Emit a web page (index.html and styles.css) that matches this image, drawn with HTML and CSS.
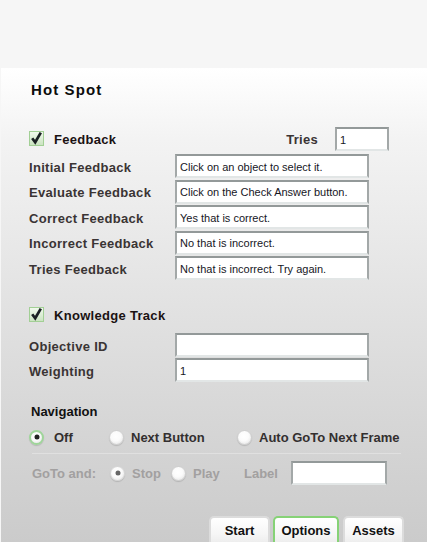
FILE: index.html
```html
<!DOCTYPE html>
<html>
<head>
<meta charset="utf-8">
<link rel="stylesheet" href="styles.css">
</head>
<body>
<div class="top"></div>
<div class="panel">
  <h1 class="title">Hot Spot</h1>

  <div class="section-head">
    <span class="check"><svg width="15" height="15" viewBox="0 0 15 15"><defs><linearGradient id="cg" x1="0" y1="0" x2="0" y2="1"><stop offset="0" stop-color="#f2f9ef"/><stop offset="1" stop-color="#c9e3bf"/></linearGradient></defs><rect x="0.5" y="0.5" width="14" height="14" fill="url(#cg)" stroke="#a2cf95"/><path d="M3.2 7.2 L6.2 11.2 L11.8 1.6" fill="none" stroke="#1b2024" stroke-width="2.7" stroke-linejoin="miter"/></svg></span>
    <span class="section-label">Feedback</span>
    <span class="tries-label">Tries</span>
    <span class="field tries-field">1</span>
  </div>

  <div class="rows">
    <div class="row"><span class="label">Initial Feedback</span><span class="field">Click on an object to select it.</span></div>
    <div class="row"><span class="label">Evaluate Feedback</span><span class="field">Click on the Check Answer button.</span></div>
    <div class="row"><span class="label">Correct Feedback</span><span class="field">Yes that is correct.</span></div>
    <div class="row"><span class="label">Incorrect Feedback</span><span class="field">No that is incorrect.</span></div>
    <div class="row"><span class="label">Tries Feedback</span><span class="field">No that is incorrect. Try again.</span></div>
  </div>

  <div class="section-head kt">
    <span class="check"><svg width="15" height="15" viewBox="0 0 15 15"><defs><linearGradient id="cg2" x1="0" y1="0" x2="0" y2="1"><stop offset="0" stop-color="#f2f9ef"/><stop offset="1" stop-color="#c9e3bf"/></linearGradient></defs><rect x="0.5" y="0.5" width="14" height="14" fill="url(#cg2)" stroke="#a2cf95"/><path d="M3.2 7.2 L6.2 11.2 L11.8 1.6" fill="none" stroke="#1b2024" stroke-width="2.7" stroke-linejoin="miter"/></svg></span>
    <span class="section-label">Knowledge Track</span>
  </div>

  <div class="rows kt-rows">
    <div class="row"><span class="label">Objective ID</span><span class="field"></span></div>
    <div class="row"><span class="label">Weighting</span><span class="field">1</span></div>
  </div>

  <div class="nav-title">Navigation</div>
  <div class="radio-row">
    <span class="opt opt-off"><span class="radio on"></span>Off</span>
    <span class="opt opt-next"><span class="radio"></span>Next Button</span>
    <span class="opt"><span class="radio"></span>Auto GoTo Next Frame</span>
  </div>
  <div class="sep"></div>
  <div class="goto-row">
    <span class="goto-label">GoTo and:</span>
    <span class="opt dis opt-stop"><span class="radio dis-on"></span>Stop</span>
    <span class="opt dis opt-play"><span class="radio dis-off"></span>Play</span>
    <span class="goto-label label-lbl">Label</span>
    <span class="field label-field"></span>
  </div>

  <div class="tabs">
    <span class="tab tab-start">Start</span>
    <span class="tab tab-options">Options</span>
    <span class="tab tab-assets">Assets</span>
  </div>
</div>
</body>
</html>
```

FILE: styles.css
```css
html, body {
  margin: 0;
  padding: 0;
}
body {
  background: #f6f6f6;
  font-family: "Liberation Sans", Arial, sans-serif;
  width: 427px;
  height: 542px;
  overflow: hidden;
}
.top {
  height: 68px;
}
.panel {
  margin-left: 1px;
  width: 426px;
  height: 474px;
  overflow: hidden;
  box-sizing: border-box;
  padding-left: 28px;
  background: linear-gradient(to bottom, #ffffff 0%, #f3f3f3 15%, #e3e3e3 48%, #d6d6d6 75%, #cbcbcb 100%);
}
.title {
  margin: 12px 0 0 2px;
  font-size: 15px;
  line-height: 20px;
  font-weight: bold;
  letter-spacing: 1.1px;
  color: #0c0c0c;
}
.section-head {
  margin-top: 27px;
  height: 24px;
  display: flex;
  align-items: center;
  padding-right: 38px;
}
.check {
  width: 15px;
  height: 15px;
  display: block;
  margin-top: -1px;
}
.check svg {
  display: block;
  overflow: visible;
}
.section-label {
  margin-left: 10px;
  font-size: 13px;
  font-weight: bold;
  letter-spacing: 0.3px;
  color: #1a1212;
  flex: 1;
}
.tries-label {
  font-size: 13px;
  font-weight: bold;
  letter-spacing: 0.3px;
  color: #3a3434;
  margin-right: 17px;
}
.field {
  display: flex;
  align-items: center;
  box-sizing: border-box;
  width: 194px;
  height: 24px;
  background: #fff;
  border-top: 2px solid #939999;
  border-left: 2px solid #a3a8a8;
  border-right: 2px solid #a3a8a8;
  border-bottom: 2px solid #e2e6e6;
  padding: 1px 0 0 3px;
  font-size: 11px;
  color: #16161e;
  white-space: nowrap;
  overflow: hidden;
}
.tries-field {
  width: 54px;
}
.rows {
  margin-top: 3px;
  display: flex;
  flex-direction: column;
  gap: 1.5px;
}
.row {
  display: flex;
  align-items: center;
  height: 24px;
}
.label {
  width: 146px;
  font-size: 13px;
  font-weight: bold;
  letter-spacing: 0.3px;
  color: #3a3434;
  padding-top: 2px;
}
.kt {
  margin-top: 23px;
}
.kt-rows {
  margin-top: 6px;
  gap: 1px;
}
.nav-title {
  margin: 22px 0 0 2px;
  font-size: 13px;
  line-height: 16px;
  font-weight: bold;
  color: #111;
}
.radio-row {
  margin-top: 7px;
  height: 20px;
  display: flex;
  align-items: center;
}
.opt {
  display: flex;
  align-items: center;
  font-size: 13px;
  font-weight: bold;
  color: #332f2f;
}
.opt-off {
  width: 80px;
}
.opt-next {
  width: 128px;
}
.radio {
  width: 15px;
  height: 15px;
  box-sizing: border-box;
  border-radius: 50%;
  border: 1px solid #cfcfcf;
  background: radial-gradient(circle at 45% 40%, #ffffff 0%, #fbfbfb 45%, #dedede 100%);
  box-shadow: 0 1px 1px rgba(0,0,0,0.14);
  margin-right: 7px;
  position: relative;
  flex: none;
}
.radio.on {
  border: 2px solid #9fd59a;
  margin-right: 10px;
}
.radio.on::after, .radio.dis-on::after {
  content: "";
  position: absolute;
  width: 5px;
  height: 5px;
  border-radius: 50%;
  background: #222;
  left: 50%;
  top: 50%;
  transform: translate(-50%, -50%);
}
.radio.dis-on {
  border-color: #d6d6d6;
  margin-right: 7px;
}
.radio.dis-on::after {
  background: #666;
}
.radio.dis-off {
  margin-right: 7px;
}
.sep {
  margin: 6px 0 0 3px;
  width: 369px;
  height: 1px;
  background: #e0e0e0;
}
.goto-row {
  margin-top: 7px;
  height: 24px;
  display: flex;
  align-items: center;
  padding-left: 3px;
}
.goto-label {
  font-size: 13px;
  font-weight: bold;
  color: #a2a0a0;
  width: 78px;
}
.dis {
  color: #a2a0a0;
}
.opt-stop {
  width: 61px;
}
.opt-play {
  width: 73px;
}
.label-lbl {
  width: 47px;
}
.label-field {
  width: 96px;
}
.tabs {
  margin-top: 31px;
  padding-left: 180px;
  display: flex;
  gap: 3px;
}
.tab {
  box-sizing: border-box;
  height: 28px;
  display: flex;
  justify-content: center;
  padding-top: 5px;
  font-size: 13px;
  font-weight: bold;
  color: #111;
  border: 2px solid #dcdcdc;
  border-bottom: none;
  border-radius: 5px 5px 0 0;
  background: linear-gradient(to bottom, #ffffff 0%, #f6f6f6 60%, #ececec 100%);
}
.tab-start {
  width: 61px;
}
.tab-options {
  width: 66px;
  border-color: #86d276;
}
.tab-assets {
  width: 61px;
  margin-left: 1px;
}
```
